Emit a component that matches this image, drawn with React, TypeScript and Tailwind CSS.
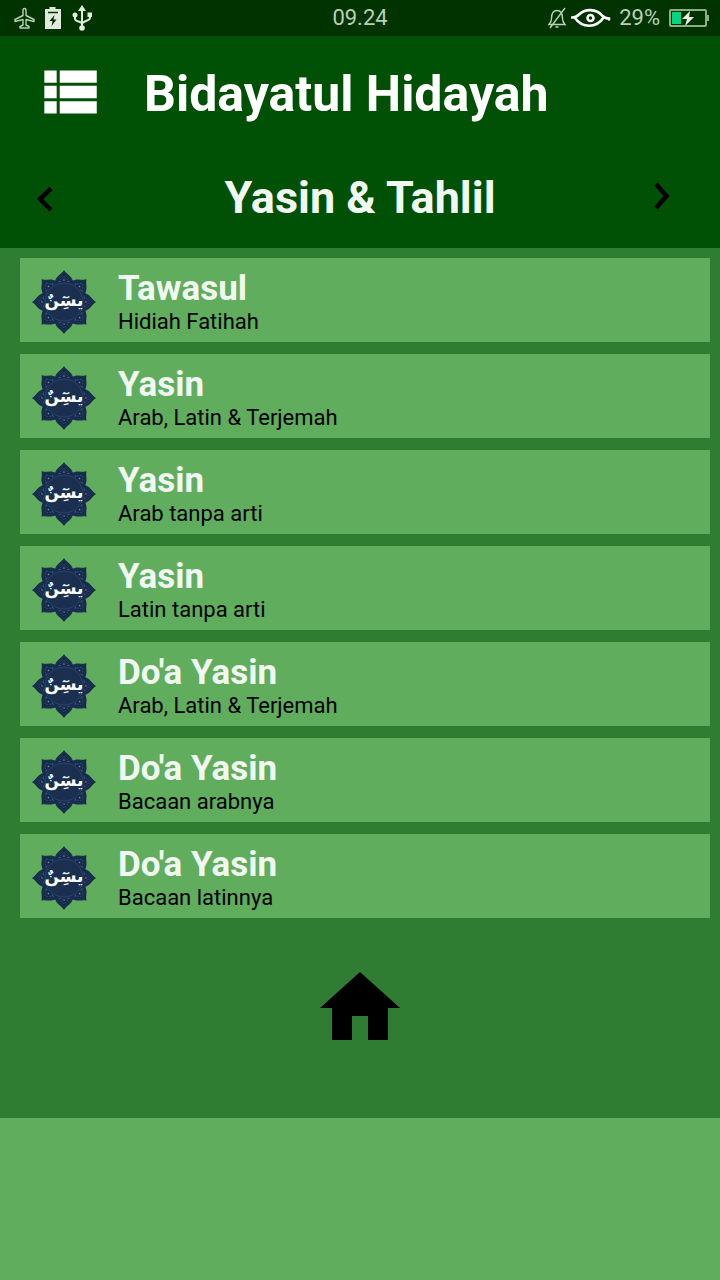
const entries = [
  { title: "Tawasul", detail: "Hidiah Fatihah" },
  { title: "Yasin", detail: "Arab, Latin & Terjemah" },
  { title: "Yasin", detail: "Arab tanpa arti" },
  { title: "Yasin", detail: "Latin tanpa arti" },
  { title: "Do'a Yasin", detail: "Arab, Latin & Terjemah" },
  { title: "Do'a Yasin", detail: "Bacaan arabnya" },
  { title: "Do'a Yasin", detail: "Bacaan latinnya" },
];

const petals = [0, 45, 90, 135, 180, 225, 270, 315];

function Emblem() {
  return (
    <svg viewBox="-32 -32 64 64" className="size-16 shrink-0" aria-hidden="true">
      <g fill="#182c4c">
        {petals.map((a) => (
          <path
            key={a}
            transform={`rotate(${a})`}
            d="M0 -32 C2 -28 7 -27 9 -21 L8 0 L-8 0 L-9 -21 C-7 -27 -2 -28 0 -32Z"
          />
        ))}
      </g>
      {petals.map((a) => (
        <g key={a} transform={`rotate(${a})`}>
          <path d="M-6 -20 L0 -26 L6 -20" fill="none" stroke="#2f4f7c" strokeWidth=".8" strokeDasharray="1.5 1.5" />
          <circle cy="-22" r=".8" fill="#6088b5" />
          <circle cx="4" cy="-20.500" r=".6" fill="#4a719f" />
          <circle cx="-4" cy="-20.500" r=".6" fill="#4a719f" />
        </g>
      ))}
      <circle r="19" fill="#1b3050" stroke="#2c4870" strokeWidth=".8" />
      <text
        x="0"
        y="4"
        textAnchor="middle"
        fill="#fff"
        direction="rtl"
        className="font-['DejaVu_Sans',sans-serif] text-[17px] font-bold"
      >
        يسِٓنٌ
      </text>
    </svg>
  );
}

function StatusBar() {
  return (
    <div className="flex h-9 items-center justify-between bg-[#003300] px-[10px] text-[#b9d0b5]">
      <div className="flex flex-1 items-center gap-2">
        <svg viewBox="0 0 24 24" className="ml-0.5 size-6" fill="none" stroke="currentColor" strokeWidth="1.4" strokeLinejoin="round" aria-label="Mode pesawat">
          <path d="M12.5 2.5c-1 0-1.5 1-1.5 2v5l-8 4v2l8-2v5.500l-3 1.500v1.500h9v-1.500l-3-1.500v-5.500l8 2v-2l-8-4v-5c0-1-.5-2-1.500-2z" />
        </svg>
        <svg viewBox="0 0 18 24" className="h-6 w-[18px]" aria-label="Hemat baterai">
          <path fill="#e0ebdd" d="M5.500 1h6v2H17v20H1V3h4.500z" />
          <path stroke="#003300" strokeWidth="1.500" d="M4 6.500h10" />
          <path fill="#003300" d="M10.500 9 5.500 15h3l-1 5 5-6.500h-3z" />
        </svg>
        <svg viewBox="0 0 24 28" className="h-7 w-6" fill="none" stroke="#e0ebdd" strokeWidth="2" aria-label="USB">
          <path d="M12 4v19M5 12v3c0 3 7 2 7 5M20 12v2c0 3-8 3-8 6" />
          <g fill="#e0ebdd" stroke="none">
            <path d="m12 1 4 6H8z" />
            <circle cx="12" cy="24" r="2.800" />
            <circle cx="5" cy="11" r="2.500" />
            <path d="M17.500 8.500h4.500V13h-4.500z" />
          </g>
        </svg>
      </div>
      <time className="text-[22px] leading-7">09.24</time>
      <div className="flex flex-1 items-center justify-end gap-1">
        <svg viewBox="0 0 20 24" className="h-6 w-5" fill="none" stroke="currentColor" strokeWidth="1.400" aria-label="Senyap">
          <path d="M2 18.500c2-2 2.500-3 2.500-6 0-5 2-8 5.500-8s5.500 3 5.500 8c0 3 .5 4 2.500 6zM8.500 21h3M18 2 3 22" />
        </svg>
        <svg viewBox="0 0 40 20" className="h-5 w-10" fill="none" stroke="#fff" strokeWidth="2.600" strokeLinecap="round" aria-label="Pelindung mata">
          <path d="M1 9.500c3 0 5-1 7-3 6-6 17-6 23 1 2 2 4 3 7 3v1M4 10c7 10 21 11 29-1" />
          <circle cx="19.500" cy="10" r="3" />
        </svg>
        <span className="mx-1 text-[22px] leading-7">29%</span>
        <svg viewBox="0 0 42 20" className="h-5 w-[42px]" aria-label="Baterai">
          <rect x="2" y="2" width="36" height="16" rx="1" fill="none" stroke="#8cae87" strokeWidth="2" />
          <path fill="#8cae87" d="M39 7h2v6h-2z" />
          <path fill="#00d780" d="M4 4h9v12H4z" />
          <path fill="#e4f2e2" d="M22 3 14 11h5l-2 7 9-9h-5z" />
        </svg>
      </div>
    </div>
  );
}

export default function App() {
  return (
    <div className="min-h-screen bg-[#60ad5e] font-[Roboto,sans-serif]">
      <StatusBar />
      <header className="bg-[#005005] text-white">
        <div className="flex h-28 items-center pl-8">
          <button type="button" aria-label="Menu">
            <svg viewBox="0 0 24 24" className="size-[74px]" fill="currentColor">
              <path d="M4 14h4v-4H4v4zm0 5h4v-4H4v4zM4 9h4V5H4v4zm5 5h12v-4H9v4zm0 5h12v-4H9v4zM9 5v4h12V5H9z" />
            </svg>
          </button>
          <h1 className="ml-[38px] pt-1 text-[50px] leading-[60px] font-bold">Bidayatul Hidayah</h1>
        </div>
        <nav className="flex h-[100px] items-center justify-between px-8 text-black">
          <button type="button" aria-label="Sebelumnya">
            <svg viewBox="0 0 40 40" className="size-10" fill="none" stroke="currentColor" strokeWidth="4.500">
              <path d="M19 10.500 8 21 19 32" />
            </svg>
          </button>
          <h2 className="text-[45px] leading-[56px] font-bold text-[#f1f8f1]">Yasin &amp; Tahlil</h2>
          <button type="button" aria-label="Berikutnya">
            <svg viewBox="0 0 40 40" className="size-10" fill="none" stroke="currentColor" strokeWidth="4.500">
              <path d="M8 6 18.500 18 8 30" />
            </svg>
          </button>
        </nav>
      </header>
      <main className="bg-[#2e7d32] pt-[10px] pb-[62px]">
        <ul className="flex flex-col gap-3 pr-[10px] pl-5">
          {entries.map((entry, i) => (
            <li key={i}>
              <a href={`#bacaan-${i + 1}`} className="flex h-[84px] items-center gap-[22px] bg-[#60ad5e] px-3 pt-1">
                <Emblem />
                <div>
                  <h3 className="text-[35px] leading-10 font-bold text-[#f1f8f1]">{entry.title}</h3>
                  <p className="text-[22px] leading-[26px] text-black">{entry.detail}</p>
                </div>
              </a>
            </li>
          ))}
        </ul>
        <div className="flex justify-center pt-[42px]">
          <a href="#beranda" aria-label="Beranda">
            <svg viewBox="0 0 24 24" className="size-24 text-black" fill="currentColor">
              <path d="M10 20v-6h4v6h5v-8h3L12 3 2 12h3v8z" />
            </svg>
          </a>
        </div>
      </main>
    </div>
  );
}
